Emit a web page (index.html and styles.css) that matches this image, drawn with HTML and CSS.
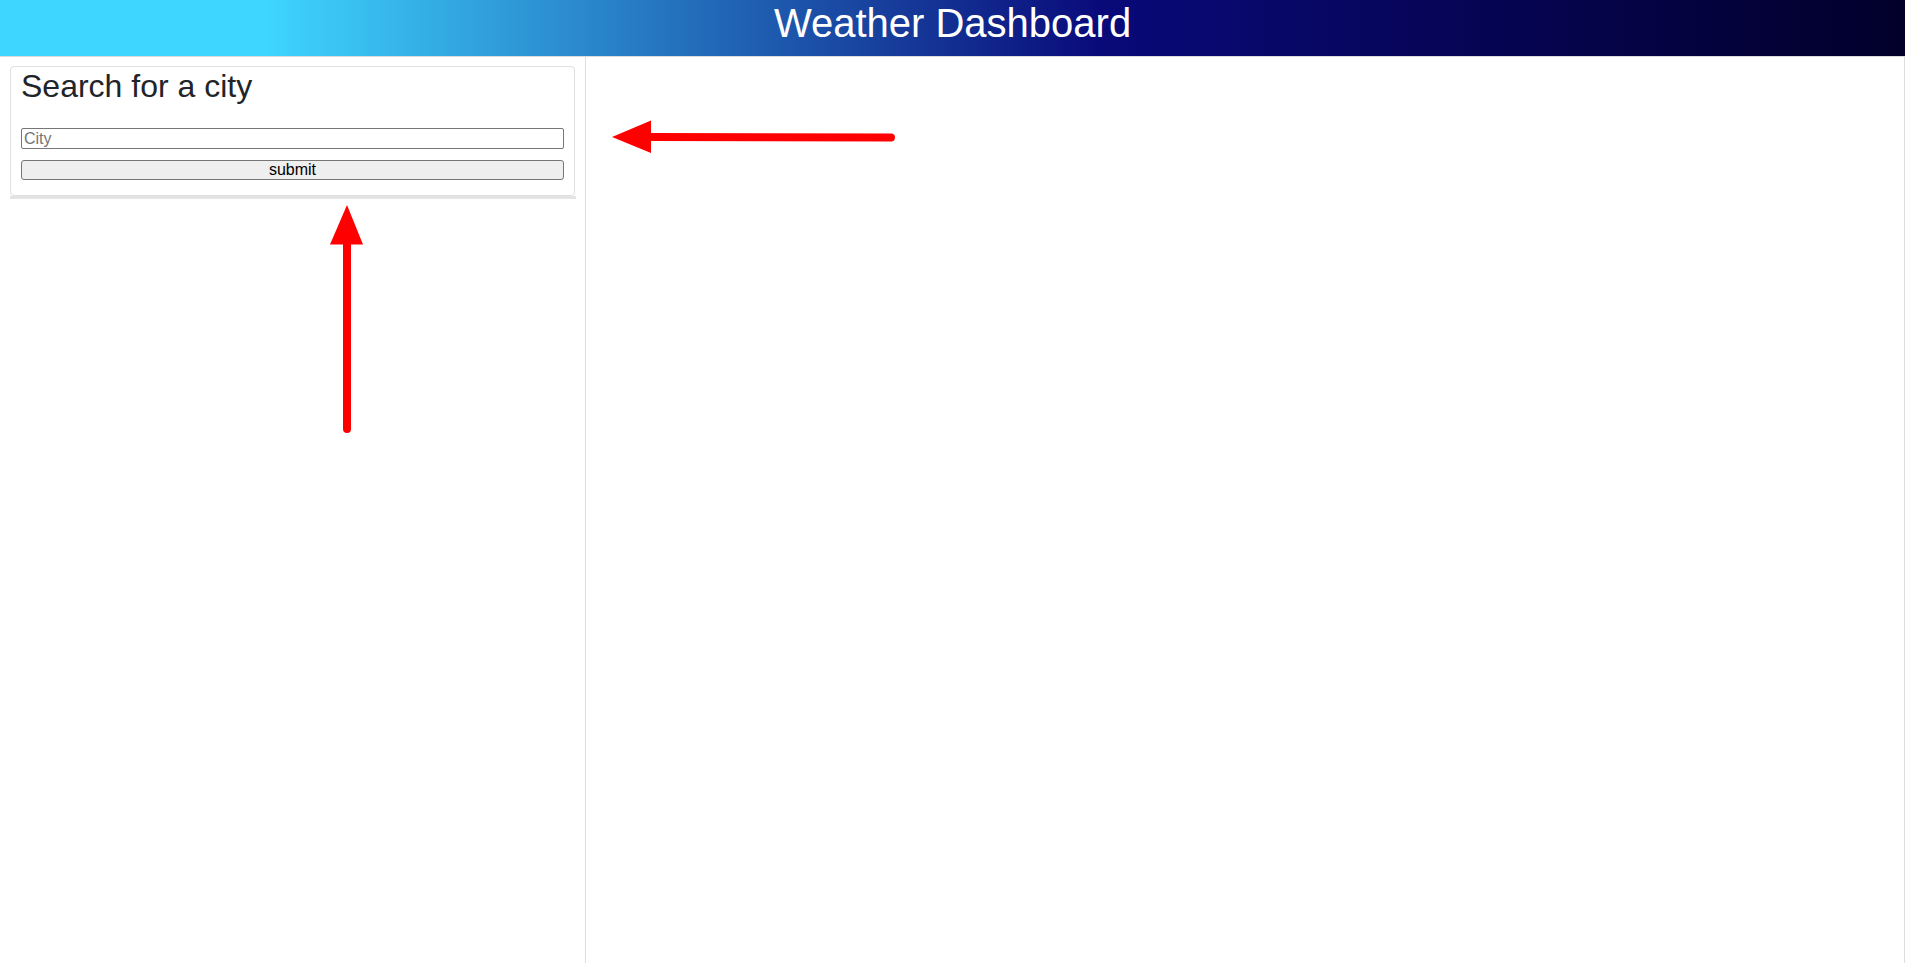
FILE: index.html
```html
<!DOCTYPE html>
<html lang="en">
<head>
<meta charset="utf-8">
<title>Weather Dashboard</title>
<link rel="stylesheet" href="styles.css">
</head>
<body>
<header class="top">
  <h1 class="top-title">Weather Dashboard</h1>
</header>
<main class="layout">
  <aside class="side">
    <section class="card">
      <h2 class="card-title">Search for a city</h2>
      <form class="search">
        <input class="city-input" type="text" placeholder="City">
        <button class="submit-btn" type="button">submit</button>
      </form>
    </section>
    <div class="history"></div>
  </aside>
  <section class="content"></section>
</main>
<svg class="marks" width="1905" height="963" viewBox="0 0 1905 963" aria-hidden="true">
  <line x1="650" y1="137" x2="891" y2="137.5" stroke="#ff0000" stroke-width="8" stroke-linecap="round"/>
  <polygon points="612,137 651,120.5 651,153" fill="#ff0000"/>
  <line x1="347" y1="243" x2="347" y2="429" stroke="#ff0000" stroke-width="8" stroke-linecap="round"/>
  <polygon points="347,205 330,244.5 363,244.5" fill="#ff0000"/>
</svg>
</body>
</html>
```

FILE: styles.css
```css
html, body {
  margin: 0;
  padding: 0;
}

body {
  font-family: "Liberation Sans", Arial, sans-serif;
  color: #212529;
  background: #ffffff;
  min-height: 100vh;
  display: flex;
  flex-direction: column;
  position: relative;
}

.top {
  height: 56px;
  background: linear-gradient(to right, #3ed5ff 0%, #3ed5ff 14%, #090979 58%, #02002a 100%);
  border-bottom: 1px solid #dcdcdc;
  text-align: center;
}

.top-title {
  margin: 0;
  font-size: 40px;
  font-weight: 400;
  line-height: 46px;
  color: #ffffff;
}

.layout {
  flex: 1;
  display: flex;
}

.side {
  box-sizing: border-box;
  width: 586px;
  padding: 9px 10px 0 10px;
  border-right: 1px solid #dedede;
}

.card {
  box-sizing: border-box;
  width: 565px;
  border: 1px solid #e0e0e0;
  border-radius: 4px;
  padding: 0 10px 15px 10px;
}

.card-title {
  margin: 0 0 23px 0;
  font-size: 32px;
  font-weight: 400;
  line-height: 38px;
  color: #212529;
}

.search {
  display: flex;
  flex-direction: column;
  gap: 11px;
}

.city-input {
  box-sizing: border-box;
  height: 21px;
  width: 100%;
  margin: 0;
  padding: 0 2px;
  border: 1px solid #767676;
  border-radius: 2px;
  font-family: "Liberation Sans", Arial, sans-serif;
  font-size: 16px;
  color: #000;
  background: #fff;
}

.city-input::placeholder {
  color: #757575;
}

.submit-btn {
  box-sizing: border-box;
  height: 20px;
  width: 100%;
  margin: 0;
  padding: 0;
  border: 1px solid #767676;
  border-radius: 3px;
  background: #efefef;
  font-family: "Liberation Sans", Arial, sans-serif;
  font-size: 16px;
  line-height: 18px;
  color: #000;
}

.history {
  width: 566px;
  height: 3px;
  background: #e4e4e4;
}

.content {
  flex: 1;
  border-right: 1px solid #dedede;
}

.marks {
  position: absolute;
  top: 0;
  left: 0;
  pointer-events: none;
}
```
